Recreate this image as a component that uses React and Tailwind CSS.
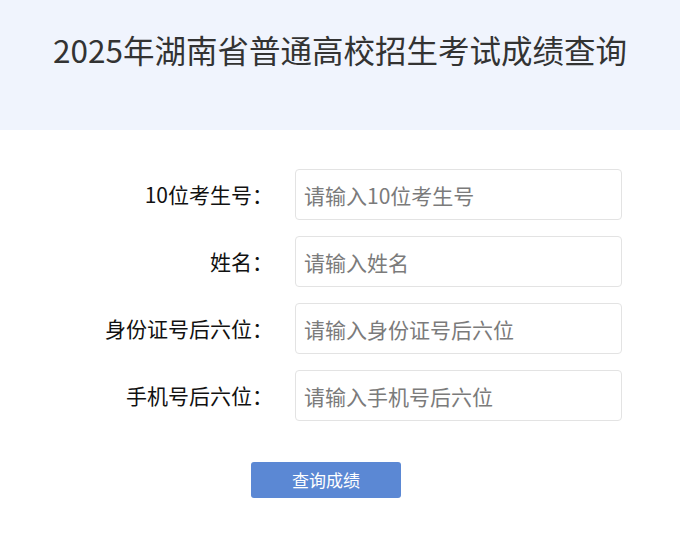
const FIELDS = [
  { label: '10位考生号：', placeholder: '请输入10位考生号' },
  { label: '姓名：', placeholder: '请输入姓名' },
  { label: '身份证号后六位：', placeholder: '请输入身份证号后六位' },
  { label: '手机号后六位：', placeholder: '请输入手机号后六位' },
];

export default function App() {
  return (
    <div className="min-h-[533px] bg-white font-['Noto_Sans_CJK_SC',sans-serif]">
      {/* Header */}
      <div className="h-[130px] bg-[#f0f4fd] pt-[26px] text-center">
        <h1 className="text-[31.5px] leading-[46px] text-[#333]">2025年湖南省普通高校招生考试成绩查询</h1>
      </div>

      {/* Form */}
      <div className="pl-[90px] pt-[39px] flex flex-col gap-[16px]">
        {FIELDS.map(f => (
          <div key={f.label} className="flex items-center">
            <label className="w-[183px] text-right text-[21px] text-[#111]">{f.label}</label>
            <input
              type="text"
              placeholder={f.placeholder}
              className="ml-[22px] w-[327px] h-[51px] rounded-[4px] border border-[#e3e3e3] px-[8px] text-[21px] placeholder:text-[#7b7b7b] outline-none"
            />
          </div>
        ))}
      </div>

      <div className="pl-[251px] pt-[41px]">
        <button className="w-[150px] h-[36px] rounded-[3px] bg-[#5b88d4] text-white text-[17px]">查询成绩</button>
      </div>
    </div>
  );
}
